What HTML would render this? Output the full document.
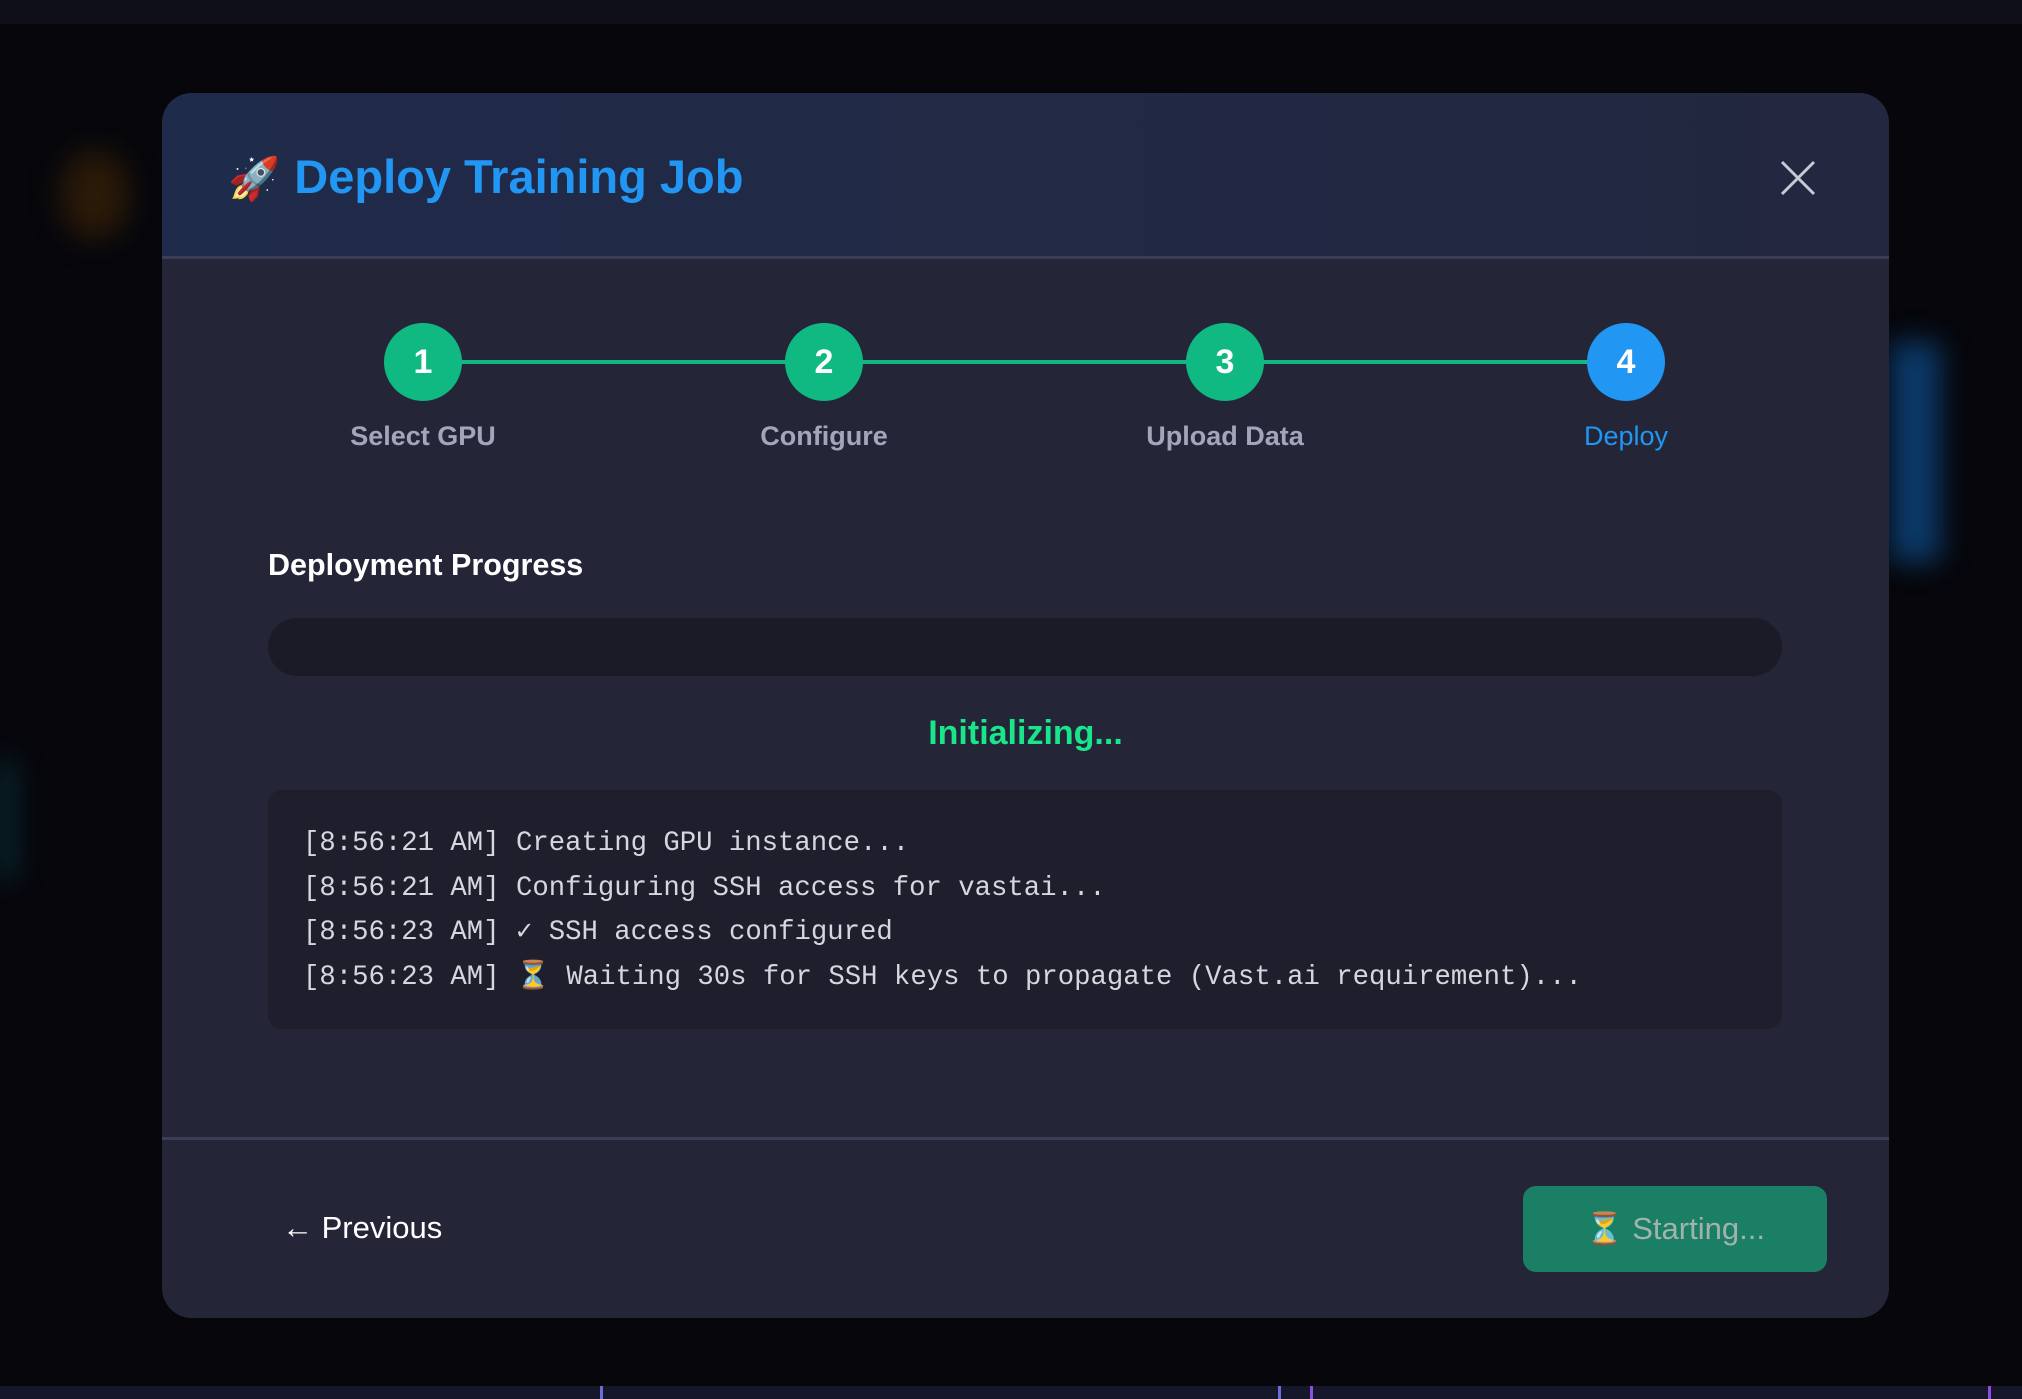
<!DOCTYPE html>
<html><head><meta charset="utf-8"><style>
*{margin:0;padding:0;box-sizing:border-box}
body{width:2022px;height:1399px;background:#06060b;position:relative;overflow:hidden;font-family:"Liberation Sans",sans-serif}
.topbar{position:absolute;left:0;top:0;width:2022px;height:24px;background:#0e0f19}
.blob{position:absolute;filter:blur(14px)}
.modal{position:absolute;left:162px;top:93px;width:1727px;height:1225px;background:#242638;border-radius:30px;overflow:hidden}
.hdr{position:absolute;left:0;top:0;width:100%;height:166px;background:linear-gradient(90deg,#1f2b4a,#23273f);border-bottom:3px solid #3a3d55}
.title{position:absolute;left:66px;top:56px;font-size:47px;font-weight:bold;color:#2196f3;white-space:nowrap}
.title span{font-family:"Noto Color Emoji","DejaVu Sans",sans-serif;font-size:42px;margin-right:14px}
.close{position:absolute;left:1618px;top:67px}
.line{position:absolute;top:267px;height:4px;background:#10b981}
.circ{position:absolute;top:230px;width:78px;height:78px;border-radius:50%;background:#10b981;color:#fff;font-weight:bold;font-size:34px;text-align:center;line-height:78px}
.lbl{position:absolute;top:328px;width:300px;text-align:center;font-size:27px;font-weight:bold;color:#a3a6ba}
.h{position:absolute;left:106px;top:455px;font-size:30.5px;font-weight:bold;color:#fff}
.bar{position:absolute;left:106px;top:525px;width:1514px;height:58px;border-radius:29px;background:#1b1b27}
.init{position:absolute;left:0;width:100%;top:621px;text-align:center;font-size:34px;font-weight:bold;color:#19e58a}
.log{position:absolute;left:106px;top:697px;width:1514px;height:239px;border-radius:14px;background:#1e1e2c;padding:32px 0 0 35px;font-family:"Liberation Mono",monospace;font-size:27.3px;color:#d6d6de;line-height:44.5px;white-space:pre}
.fdiv{position:absolute;left:0;top:1044px;width:100%;height:3px;background:#3a3d55}
.prev{position:absolute;left:120px;top:1117px;font-size:31px;color:#fff}
.btn{position:absolute;left:1361px;top:1093px;width:304px;height:86px;border-radius:13px;background:#1a7f64;color:#a2b3ad;font-size:31px;text-align:center;line-height:86px}
</style></head><body>
<div class="topbar"></div>
<div class="blob" style="left:1890px;top:342px;width:50px;height:220px;background:#0b3a6a"></div>
<div class="blob" style="left:60px;top:150px;width:70px;height:90px;background:#2a1a08;border-radius:50%"></div>
<div class="blob" style="left:0;top:760px;width:12px;height:120px;background:#0a3f4a"></div>
<div style="position:absolute;left:0;top:1386px;width:2022px;height:13px;background:#16172a"></div>
<div style="position:absolute;left:600px;top:1386px;width:3px;height:13px;background:#6a6fd8"></div>
<div style="position:absolute;left:1278px;top:1386px;width:3px;height:13px;background:#6a6fd8"></div>
<div style="position:absolute;left:1310px;top:1386px;width:3px;height:13px;background:#8a4fe0"></div>
<div style="position:absolute;left:1988px;top:1386px;width:3px;height:13px;background:#8a4fe0"></div>
<div class="modal">
 <div class="hdr"></div>
 <div class="title"><span>🚀</span>Deploy Training Job</div>
 <svg class="close" width="36" height="36" viewBox="0 0 36 36"><path d="M2 2L34 34M34 2L2 34" stroke="#c8cad6" stroke-width="3"/></svg>
 <div class="line" style="left:300px;width:1164px"></div>
 <div class="circ" style="left:222px">1</div>
 <div class="circ" style="left:623px">2</div>
 <div class="circ" style="left:1024px">3</div>
 <div class="circ" style="left:1425px;background:#2196f3">4</div>
 <div class="lbl" style="left:111px">Select GPU</div>
 <div class="lbl" style="left:512px">Configure</div>
 <div class="lbl" style="left:913px">Upload Data</div>
 <div class="lbl" style="left:1314px;color:#2196f3;font-weight:normal">Deploy</div>
 <div class="h">Deployment Progress</div>
 <div class="bar"></div>
 <div class="init">Initializing...</div>
 <div class="log">[8:56:21 AM] Creating GPU instance...
[8:56:21 AM] Configuring SSH access for vastai...
[8:56:23 AM] ✓ SSH access configured
[8:56:23 AM] ⏳ Waiting 30s for SSH keys to propagate (Vast.ai requirement)...</div>
 <div class="fdiv"></div>
 <div class="prev">← Previous</div>
 <div class="btn">⏳ Starting...</div>
</div>
</body></html>
